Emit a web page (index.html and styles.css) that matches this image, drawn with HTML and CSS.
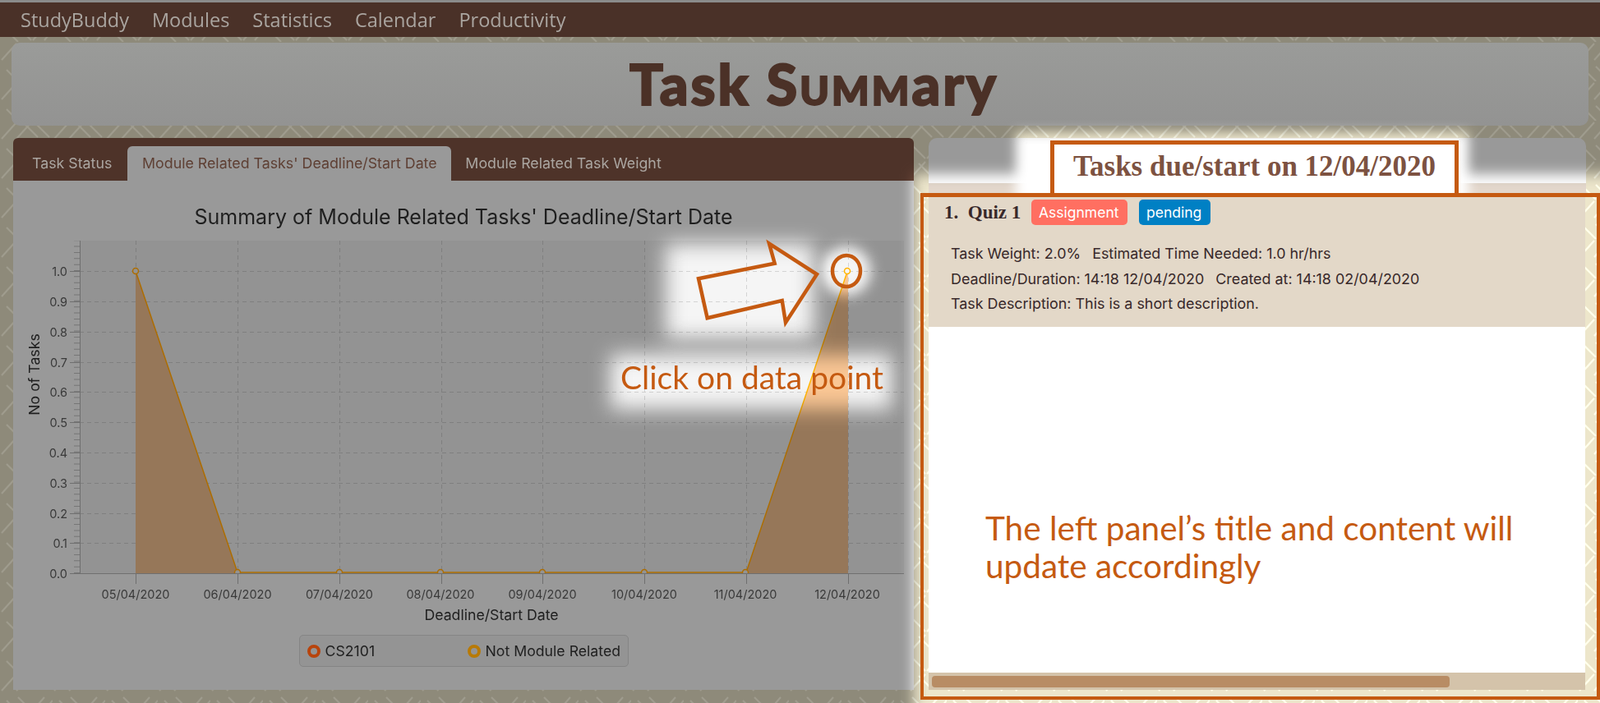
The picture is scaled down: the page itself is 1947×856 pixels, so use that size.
FILE: index.html
```html
<!DOCTYPE html>
<html lang="en">
<head>
    <meta charset="UTF-8">
    <title>StudyBuddy - Task Summary</title>
    <link rel="stylesheet" href="styles.css">
</head>
<body>
<div class="page">

    <nav class="menu">
        <span>StudyBuddy</span>
        <span>Modules</span>
        <span>Statistics</span>
        <span>Calendar</span>
        <span>Productivity</span>
    </nav>

    <header class="title-panel">
        <h1>Task S<span class="smallcaps">umm</span>ary</h1>
    </header>

    <main class="columns">
        <section class="left">
            <div class="tabs">
                <span class="tab">Task Status</span>
                <span class="tab active">Module Related Tasks' Deadline/Start Date</span>
                <span class="tab">Module Related Task Weight</span>
            </div>
            <div class="chart-body">
                <h2 class="chart-title">Summary of Module Related Tasks' Deadline/Start Date</h2>
                <svg class="chart" width="1096" height="485" viewBox="16 285 1096 485">
                    <defs>
                        <clipPath id="plotClip"><rect x="97" y="293" width="1003" height="405"/></clipPath>
                    </defs>
                    <rect x="97" y="293" width="1003" height="405" fill="#939393"/>

                    <!-- grid -->
                    <path class="grid" d="M97 330.5H1100M97 367.5H1100M97 404.5H1100M97 441.5H1100M97 477.5H1100M97 514.5H1100M97 551.5H1100M97 588.5H1100M97 625.5H1100M97 661.5H1100"/>
                    <path class="grid" d="M165.500 293V698M289.500 293V698M413.500 293V698M537.500 293V698M660.500 293V698M784.500 293V698M908.500 293V698M1032.500 293V698"/>

                    <!-- area and line -->
                    <path class="area" d="M165 330L289 698H165Z"/>
                    <path class="area" d="M908 698L1032 330V698Z"/>
                    <path class="series" d="M165 330L289 697H908L1031 331"/>
                    <g class="points" clip-path="url(#plotClip)">
                        <circle cx="165" cy="330" r="3.500"/>
                        <circle cx="289" cy="697" r="3.500"/>
                        <circle cx="413" cy="697" r="3.500"/>
                        <circle cx="536" cy="697" r="3.500"/>
                        <circle cx="660" cy="697" r="3.500"/>
                        <circle cx="784" cy="697" r="3.500"/>
                        <circle cx="907" cy="697" r="3.500"/>
                        <circle cx="1031" cy="330" r="3.500"/>
                    </g>

                    <!-- axes -->
                    <path class="axis" d="M97.500 293V698M85 698.500H1100"/>
                    <line class="minor" x1="93.500" y1="698" x2="93.500" y2="293"/>
                    <path class="axis" d="M85 330.500H97M85 367.500H97M85 404.500H97M85 441.500H97M85 477.500H97M85 514.500H97M85 551.500H97M85 588.500H97M85 625.500H97M85 661.500H97"/>
                    <path class="axis" d="M165.500 698V711M289.500 698V711M413.500 698V711M537.500 698V711M660.500 698V711M784.500 698V711M908.500 698V711M1032.500 698V711"/>

                    <g class="y-labels">
                        <text x="82" y="336">1.0</text>
                        <text x="82" y="373">0.9</text>
                        <text x="82" y="410">0.8</text>
                        <text x="82" y="447">0.7</text>
                        <text x="82" y="483">0.6</text>
                        <text x="82" y="520">0.5</text>
                        <text x="82" y="557">0.4</text>
                        <text x="82" y="594">0.3</text>
                        <text x="82" y="631">0.2</text>
                        <text x="82" y="667">0.1</text>
                        <text x="82" y="704">0.0</text>
                    </g>
                    <g class="x-labels">
                        <text x="165" y="729">05/04/2020</text>
                        <text x="289" y="729">06/04/2020</text>
                        <text x="413" y="729">07/04/2020</text>
                        <text x="536" y="729">08/04/2020</text>
                        <text x="660" y="729">09/04/2020</text>
                        <text x="784" y="729">10/04/2020</text>
                        <text x="907" y="729">11/04/2020</text>
                        <text x="1031" y="729">12/04/2020</text>
                    </g>
                    <text class="axis-label" x="598" y="755">Deadline/Start Date</text>
                    <text class="axis-label" transform="translate(48 456) rotate(-90)">No of Tasks</text>
                </svg>
                <div class="legend">
                    <span class="legend-item first"><i class="dot red"></i>CS2101</span>
                    <span class="legend-item"><i class="dot amber"></i>Not Module Related</span>
                </div>
            </div>
        </section>

        <section class="right">
            <div class="right-head">
                <div class="date-title">Tasks due/start on 12/04/2020</div>
            </div>
            <div class="frame">
                <div class="task-card">
                    <div class="task-top">
                        <span class="task-name">1.&nbsp; Quiz 1</span>
                        <span class="chip coral">Assignment</span>
                        <span class="chip blue">pending</span>
                    </div>
                    <div class="task-info">
                        <p><span>Task Weight: 2.0%</span><span>Estimated Time Needed: 1.0 hr/hrs</span></p>
                        <p><span>Deadline/Duration: 14:18 12/04/2020</span><span>Created at: 14:18 02/04/2020</span></p>
                        <p><span>Task Description: This is a short description.</span></p>
                    </div>
                </div>
                <div class="empty-list">
                    <p class="note">The left panel’s title and content will<br>update accordingly</p>
                </div>
                <div class="scrollbar"><div class="thumb"></div></div>
            </div>
        </section>
    </main>

    <!-- screenshot annotation: dimmed page with lit patches -->
    <div class="spot spot-arrow"></div>
    <div class="spot spot-dot"></div>
    <div class="spot spot-click"></div>
    <div class="spot spot-right"></div>
    <div class="spot spot-title"></div>

    <svg class="marks" width="1947" height="856" viewBox="0 0 1947 856">
        <path d="M850 339.300L942.700 320.700L936 296.700L994 334L956 392.700L951.700 366L860.700 387.300Z"/>
        <ellipse cx="1030" cy="330" rx="17" ry="19"/>
    </svg>
    <span class="click-note">Click on data point</span>

</div>
</body>
</html>
```

FILE: styles.css
```css
/* page */
* {
    box-sizing: border-box;
}

body {
    margin: 0;
}

.page {
    position: relative;
    isolation: isolate;
    width: 1947px;
    height: 856px;
    overflow: hidden;
    border-top: 3px solid #8b8b8b;
    font-family: "Inter", "Liberation Sans", sans-serif;
    background-color: #8e8a7a;
    background-image: url("data:image/svg+xml,%3Csvg xmlns='http://www.w3.org/2000/svg' width='64' height='48'%3E%3Cpath d='M2 22L20 2M20 22L38 2M46 20L30 4M60 20L44 4M8 34L22 48M22 30L38 46M40 46L54 30M54 46L64 34' stroke='%239f9c8e' stroke-width='2' fill='none'/%3E%3C/svg%3E");
}

/* top menu */
.menu {
    display: flex;
    gap: 28px;
    height: 42px;
    align-items: center;
    padding: 0 25px;
    background: #4a3128;
    color: #aaa5a0;
    font-family: "Open Sans", sans-serif;
    font-size: 23.500px;
}

.title-panel {
    height: 101px;
    margin: 7px 14px 0 14px;
    padding-left: 34px;
    background: linear-gradient(to bottom, #9a9b99, #939392);
    border-radius: 10px;
    text-align: center;
}

h1 {
    margin: 0;
    padding-top: 14px;
    color: #4b3127;
    font-family: "Lato", sans-serif;
    font-weight: 900;
    font-size: 68px;
    line-height: 72px;
    letter-spacing: 3px;
    -webkit-text-stroke: 2px #4b3127;
}

.smallcaps {
    font-variant: small-caps;
}

.columns {
    display: flex;
    margin-top: 15px;
    padding-left: 16px;
}

/* left panel */
.left {
    width: 1096px;
}

.tabs {
    display: flex;
    height: 52px;
    align-items: flex-end;
    padding-left: 23px;
    background: #4e3329;
    border-radius: 6px 6px 0 0;
    color: #aba6a1;
    font-size: 17.800px;
}

.tab {
    height: 42px;
    line-height: 42px;
    margin-right: 19px;
}

.tab.active {
    width: 394px;
    margin-right: 17px;
    text-align: center;
    background: #999;
    color: #5e3f33;
    border-radius: 6px 6px 0 0;
}

.chart-body {
    height: 620px;
    background: #999;
    padding-top: 28px;
}

.chart-title {
    margin: 0;
    height: 32px;
    line-height: 32px;
    text-align: center;
    color: #1f1f1f;
    font-size: 25px;
    font-weight: 400;
}

.chart {
    display: block;
    margin-top: 5px;
}

.grid {
    stroke: #7f7f7f;
    stroke-width: 1;
    stroke-dasharray: 5 4;
    fill: none;
}

.area {
    fill: #967759;
}

.series {
    stroke: #ad6d00;
    stroke-width: 1.500;
    fill: none;
}

.points circle {
    fill: #939393;
    stroke: #ad6d00;
    stroke-width: 1.500;
}

.axis {
    stroke: #6f6f6f;
    stroke-width: 1;
    fill: none;
}

.minor {
    stroke: #767676;
    stroke-width: 7;
    stroke-dasharray: 1 6.360;
}

.y-labels text,
.x-labels text {
    fill: #3a3a3a;
    font-size: 14.500px;
}

.y-labels text {
    text-anchor: end;
}

.x-labels text {
    text-anchor: middle;
}

.axis-label {
    fill: #1f1f1f;
    font-size: 17.700px;
    text-anchor: middle;
}

.legend {
    display: flex;
    width: 401px;
    height: 39px;
    align-items: center;
    margin: 3px auto 0 auto;
    padding-left: 9px;
    background: #949494;
    border: 1px solid #858585;
    border-radius: 5px;
    color: #1f1f1f;
    font-size: 17.700px;
}

.legend-item {
    display: flex;
    align-items: center;
    gap: 6px;
}

.legend-item.first {
    width: 195px;
}

.dot {
    width: 16px;
    height: 16px;
    border-radius: 50%;
    border: 4px solid;
}

.dot.red {
    border-color: #b8440c;
}

.dot.amber {
    border-color: #b87a06;
}

/* right panel */
.right {
    width: 827px;
    margin-left: 8px;
    display: flex;
    flex-direction: column;
}

.right-head {
    height: 67px;
    margin: 0 17px 0 10px;
    padding: 3px 0 0 148px;
    border-radius: 10px 10px 0 0;
    background: linear-gradient(to bottom, #999 55px, #88817a 55px);
}

.date-title {
    position: relative;
    z-index: 2;
    width: 497px;
    height: 66px;
    line-height: 54px;
    text-align: center;
    background: #fff;
    border: 5px solid #c55a11;
    border-bottom: 0;
    color: #7d5241;
    font-family: "Liberation Serif", serif;
    font-weight: 700;
    font-size: 35px;
}

.frame {
    position: relative;
    z-index: 2;
    display: flex;
    flex-direction: column;
    height: 617px;
    border: 4px solid #c55a11;
    border-top-width: 5px;
    padding: 0 14px 8px 6px;
}

.task-card {
    height: 158px;
    background: #e3d8c8;
    color: #38282a;
}

.task-top {
    display: flex;
    align-items: center;
    height: 34px;
    padding: 3px 0 0 19px;
}

.task-name {
    width: 106px;
    font-family: "Liberation Serif", serif;
    font-weight: 700;
    font-size: 23px;
}

.chip {
    height: 31px;
    line-height: 31px;
    padding: 0 9px;
    border-radius: 5px;
    color: #fff;
    font-size: 17.500px;
}

.chip.coral {
    width: 117px;
    background: #ff6f61;
    margin-right: 14px;
}

.chip.blue {
    width: 87px;
    background: #0080c4;
}

.task-info {
    margin: 20px 0 0 27px;
    font-size: 17.900px;
}

.task-info p {
    display: flex;
    gap: 14px;
    margin: 0;
    height: 30.500px;
    line-height: 30.500px;
}

.empty-list {
    height: 421px;
    background: #fff;
    padding: 222px 0 0 69px;
}

.note {
    margin: 0;
    color: #c55a11;
    font-family: "Lato", sans-serif;
    font-size: 40.500px;
    line-height: 46px;
}

.scrollbar {
    height: 21px;
    padding: 4px;
    background: #d4c3aa;
}

.thumb {
    width: 630px;
    height: 14px;
    background: #b88c64;
    border-radius: 4px;
}

/* dim / highlight of the annotated screenshot */
.spot {
    position: absolute;
    z-index: 1;
    background: #666;
    mix-blend-mode: color-dodge;
}

.spot-arrow {
    left: 810px;
    top: 294px;
    width: 180px;
    height: 115px;
    filter: blur(12px);
}

.spot-dot {
    left: 1000px;
    top: 297px;
    width: 60px;
    height: 60px;
    border-radius: 50%;
    filter: blur(8px);
}

.spot-click {
    left: 743px;
    top: 429px;
    width: 342px;
    height: 66px;
    filter: blur(12px);
}

.spot-right {
    left: 1112px;
    top: 209px;
    width: 900px;
    height: 700px;
    filter: blur(8px);
}

.spot-title {
    left: 1236px;
    top: 158px;
    width: 551px;
    height: 84px;
    filter: blur(7px);
}

.marks {
    position: absolute;
    z-index: 2;
    left: 0;
    top: -3px;
}

.marks path,
.marks ellipse {
    fill: none;
    stroke: #c55a11;
    stroke-width: 4.500;
}

.click-note {
    position: absolute;
    z-index: 2;
    left: 755px;
    top: 433px;
    color: #c55a11;
    font-family: "Lato", sans-serif;
    font-size: 39px;
    line-height: 46px;
}
```
